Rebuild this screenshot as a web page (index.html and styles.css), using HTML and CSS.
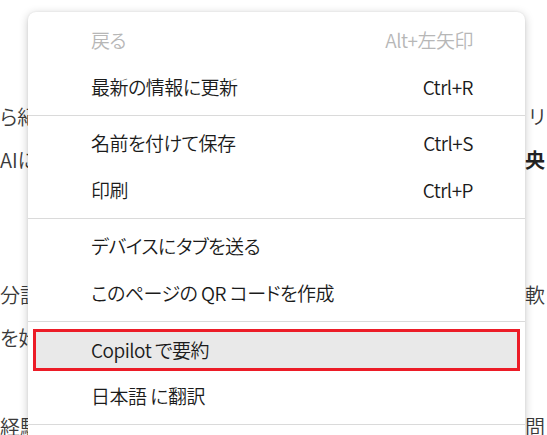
FILE: index.html
```html
<!DOCTYPE html>
<html lang="ja">
<head>
<meta charset="utf-8">
<title>Context menu</title>
<link rel="stylesheet" href="styles.css">
</head>
<body>
<div class="page">
  <div class="para p1">
    <div class="line"><span>ら紀</span><span>リ</span></div>
    <div class="line"><span>AIに</span><span class="strong">央</span></div>
  </div>
  <div class="para p2">
    <div class="line"><span>分説</span><span>軟</span></div>
    <div class="line"><span>を始</span><span></span></div>
  </div>
  <div class="para p3">
    <div class="line"><span>経験</span><span>問</span></div>
  </div>
</div>

<div class="menu">
  <div class="item disabled"><span class="label">戻る</span><span class="key">Alt+左矢印</span></div>
  <div class="item"><span class="label">最新の情報に更新</span><span class="key">Ctrl+R</span></div>
  <div class="sep"></div>
  <div class="item"><span class="label">名前を付けて保存</span><span class="key">Ctrl+S</span></div>
  <div class="item"><span class="label">印刷</span><span class="key">Ctrl+P</span></div>
  <div class="sep"></div>
  <div class="item"><span class="label">デバイスにタブを送る</span></div>
  <div class="item"><span class="label">このページの QR コードを作成</span></div>
  <div class="sep"></div>
  <div class="item active"><span class="label">Copilot で要約</span></div>
  <div class="item"><span class="label">日本語 に翻訳</span></div>
  <div class="sep"></div>
</div>
</body>
</html>
```
FILE: styles.css
```css
html, body {
  margin: 0;
  padding: 0;
  background: #ffffff;
  width: 547px;
  height: 435px;
  overflow: hidden;
}
body {
  position: relative;
  font-family: "Noto Sans CJK JP", "Noto Sans", sans-serif;
  font-feature-settings: "palt";
  font-weight: 350;
}
.page {
  padding-top: 95px;
  color: #3a3a3a;
  font-size: 20px;
}
.para .line {
  display: flex;
  justify-content: space-between;
  height: 43px;
  line-height: 43px;
  padding-right: 2px;
  white-space: nowrap;
}
.p2 { margin-top: 92px; }
.p3 { margin-top: 46px; }
.strong { font-weight: 700; color: #222; }

.menu {
  position: absolute;
  left: 28px;
  top: 12px;
  width: 497px;
  padding: 5px 0 60px;
  background: #ffffff;
  border-radius: 8px;
  box-shadow: 0 2px 10px rgba(0, 0, 0, 0.22), 0 0 2px rgba(0, 0, 0, 0.08);
  color: #1b1b1b;
  font-size: 19px;
  letter-spacing: -0.5px;
}
.item {
  box-sizing: border-box;
  display: flex;
  justify-content: space-between;
  align-items: center;
  height: 47px;
  padding: 0 52px 3px 63px;
  white-space: nowrap;
}
.item.disabled { color: #b7b7b7; }
.key { font-feature-settings: normal; }
.item.active {
  height: 42px;
  margin: 3px 5px 2px;
  padding: 0 47px 1px 55px;
  border: 3px solid #ec1c27;
  background: #e9e9e9;
}
.sep {
  height: 9px;
  display: flex;
  align-items: center;
}
.sep::before {
  content: "";
  display: block;
  width: 100%;
  height: 1px;
  background: #dadada;
}
```
